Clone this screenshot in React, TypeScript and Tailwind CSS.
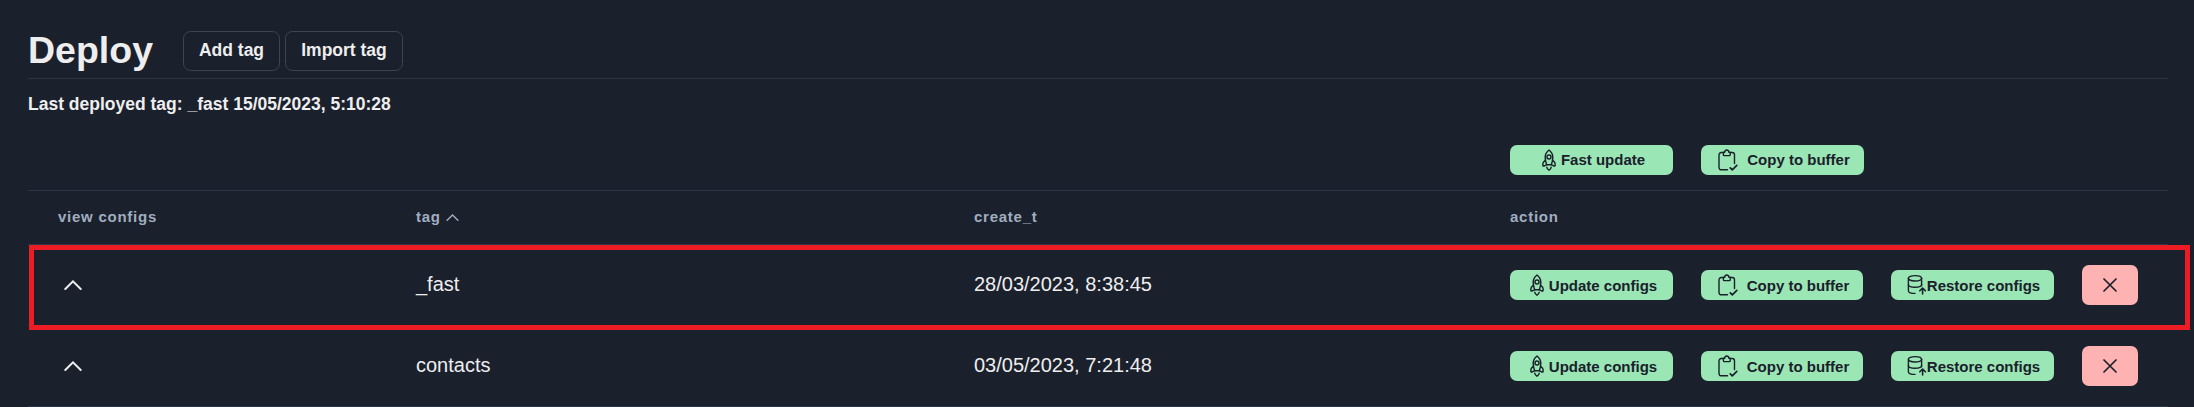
import type { ReactNode } from "react";

const stroke = {
  fill: "none",
  stroke: "currentColor",
  strokeLinecap: "round" as const,
  strokeLinejoin: "round" as const,
};

function RocketIcon() {
  return (
    <svg className="h-[22px] w-[14px] shrink-0" viewBox="0 0 14 22" strokeWidth="1.45" {...stroke}>
      <path d="M7 1C4.500 2.900 3.200 5.200 3.200 8.200c0 2.800.6 5.200 1.500 7.600h4.600c.9-2.400 1.500-4.800 1.500-7.600C10.800 5.200 9.500 2.900 7 1z" />
      <circle cx="7" cy="8" r="2" />
      <path d="M3.400 11.200 1.600 13c-.9.9-.9 2-.6 3.800 1.200.8 1.800-.7 3.600-.9" />
      <path d="M10.600 11.200l1.800 1.800c.9.9.9 2 .6 3.800-1.200.8-1.800-.7-3.600-.9" />
      <path d="M4.800 18.200c.1 1.300 1 2.200 2.200 3 1.200-.8 2.100-1.700 2.200-3" />
    </svg>
  );
}

function ClipboardIcon() {
  return (
    <svg className="h-[22px] w-5 shrink-0" viewBox="0 0 20 22" strokeWidth="1.4" {...stroke}>
      <path d="M5 3.500H3.200A2.200 2.200 0 0 0 1 5.700v12.900a2.200 2.200 0 0 0 2.200 2.200h6.300" />
      <path d="M12.500 3.500h1.800a2.200 2.200 0 0 1 2.200 2.200v8.800" />
      <path d="M5.400 5.800V3.300h1.200C6.800 1.800 7.600 1 8.800 1s2 .8 2.200 2.300h1.200v2.500q0 .8-.8.8H6.200q-.8 0-.8-.8z" />
      <path d="M12.300 18.800l2 2 4.500-4.500" strokeWidth="1.7" />
    </svg>
  );
}

function DatabaseIcon() {
  return (
    <svg className="h-[22px] w-5 shrink-0" viewBox="0 0 20 22" strokeWidth="1.4" {...stroke}>
      <ellipse cx="8" cy="4.300" rx="6.600" ry="2.700" />
      <path d="M1.400 4.300v12.400c0 1.500 2.500 2.700 6.600 2.700" />
      <path d="M14.600 4.300v7.400" />
      <path d="M1.400 10.500c0 1.500 3 2.700 6.600 2.700s6.600-1.200 6.600-2.700" />
      <path d="M15.600 20v-5.800M12.800 16.800l2.800-2.800 2.800 2.800" strokeWidth="1.6" />
    </svg>
  );
}

function ChevronUp({ className }: { className: string }) {
  return (
    <svg className={className} viewBox="0 0 18 10" strokeWidth="2" {...stroke} strokeLinejoin="miter">
      <path d="M1.300 9 9 1.400 16.700 9" />
    </svg>
  );
}

function ActionButton({ icon, layout, children }: { icon: ReactNode; layout: string; children: ReactNode }) {
  return (
    <button
      className={`flex h-[30px] items-center justify-center rounded-[7px] bg-[#9ae6b4] text-[15px] font-bold whitespace-nowrap text-[#1a202c] ${layout}`}
    >
      {icon}
      {children}
    </button>
  );
}

function HeaderButton({ className, children }: { className: string; children: ReactNode }) {
  return (
    <button
      className={`h-10 rounded-[7.5px] border border-[#3f444e] pb-0.5 text-[17.5px] font-bold whitespace-nowrap ${className}`}
    >
      {children}
    </button>
  );
}

const columns = "grid grid-cols-[358px_558px_536px_1fr] items-center border-b border-[#2d3748] pl-[30px]";

const rows = [
  { tag: "_fast", created: "28/03/2023, 8:38:45", marked: true },
  { tag: "contacts", created: "03/05/2023, 7:21:48", marked: false },
];

function TagRow({ tag, created, marked }: (typeof rows)[number]) {
  return (
    <div className={`relative h-[81px] text-xl ${columns}`}>
      <div className="pl-1.5">
        <ChevronUp className="h-2.5 w-[18px]" />
      </div>
      <div className="pb-0.5">{tag}</div>
      <div className="pb-0.5">{created}</div>
      <div className="flex items-center">
        <ActionButton icon={<RocketIcon />} layout="w-[163px] gap-[5px] pl-1">
          Update configs
        </ActionButton>
        <div className="ml-7">
          <ActionButton icon={<ClipboardIcon />} layout="w-[162px] gap-[9px] pl-[3px]">
            Copy to buffer
          </ActionButton>
        </div>
        <div className="ml-7">
          <ActionButton icon={<DatabaseIcon />} layout="w-[163px] gap-0 pl-0.5">
            Restore configs
          </ActionButton>
        </div>
        <button className="ml-7 flex h-10 w-14 items-center justify-center rounded-[7px] bg-[#feb2b2] text-[#1a202c]">
          <svg className="size-3.5" viewBox="0 0 14 14" strokeWidth="1.7" {...stroke}>
            <path d="M1 1l12 12M13 1 1 13" />
          </svg>
        </button>
      </div>
      {marked && (
        <div className="pointer-events-none absolute top-0 -right-[22px] left-px z-10 h-[85px] border-5 border-[#ed1c24]" />
      )}
    </div>
  );
}

export default function App() {
  return (
    <main className="h-[407px] w-[2194px] overflow-hidden bg-[#1a202c] pr-[26px] pl-7 font-['Liberation_Sans',Arial,sans-serif] text-[#eeeeef]">
      <header className="flex h-[79px] items-start border-b border-[#2f343f] pt-[31px]">
        <h1 className="w-[155px] text-[37.500px] leading-[38px] font-bold">Deploy</h1>
        <div className="flex gap-[5px]">
          <HeaderButton className="w-[97px]">Add tag</HeaderButton>
          <HeaderButton className="w-[118px]">Import tag</HeaderButton>
        </div>
      </header>
      <p className="h-[66px] pt-[14px] text-[17.500px] leading-[22px] font-bold">
        Last deployed tag: _fast 15/05/2023, 5:10:28
      </p>
      <div className="flex h-[46px] gap-7 border-b border-[#2d3748] pl-[1482px]">
        <ActionButton icon={<RocketIcon />} layout="w-[163px] gap-[5px] pl-1">
          Fast update
        </ActionButton>
        <ActionButton icon={<ClipboardIcon />} layout="w-[163px] gap-[9px] pl-[3px]">
          Copy to buffer
        </ActionButton>
      </div>
      <div className={`h-[54px] text-[15px] font-bold tracking-[0.05em] text-[#a0aec0] ${columns}`}>
        <div>view configs</div>
        <div className="flex items-center gap-[5px]">
          tag
          <ChevronUp className="h-[7px] w-[13px]" />
        </div>
        <div>create_t</div>
        <div>action</div>
      </div>
      {rows.map((row) => (
        <TagRow key={row.tag} {...row} />
      ))}
    </main>
  );
}
